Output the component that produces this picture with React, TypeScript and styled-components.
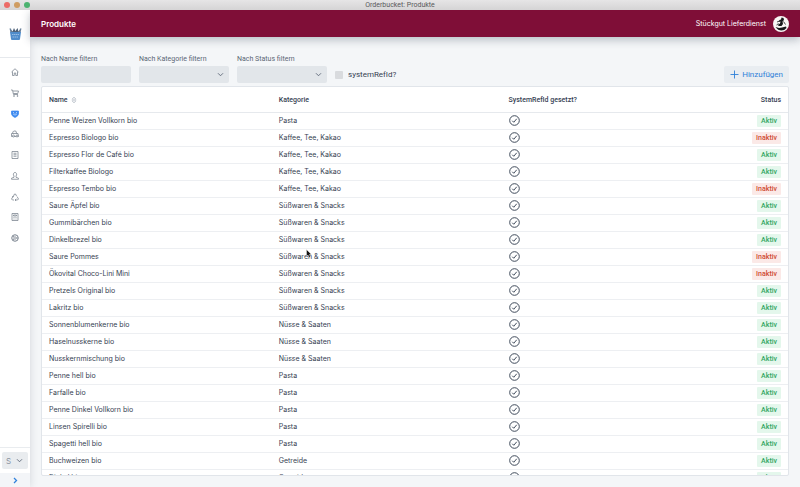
import React from "react";
import styled, { createGlobalStyle, css } from "styled-components";

const compactFont = 'Roboto, "Liberation Sans", sans-serif';

const GlobalStyle = createGlobalStyle`
  *, *::before, *::after { box-sizing: border-box; }
  body {
    margin: 0;
    background: #f4f6f8;
    color: #364152;
    font-family: Inter, "Liberation Sans", sans-serif;
    font-size: 7px;
    line-height: 10px;
  }
  button, input, select { font: inherit; color: inherit; }
`;

const Window = styled.div`
  position: relative;
  display: flex;
  flex-direction: column;
  height: 100vh;
  overflow: hidden;
`;

const TitleBar = styled.div`
  position: relative;
  flex: none;
  display: flex;
  align-items: center;
  justify-content: center;
  height: 10px;
  background: linear-gradient(#e6e5e6, #d5d4d5);
  color: #59595b;
  font-family: ${compactFont};
`;

const TrafficLights = styled.div`
  position: absolute;
  left: 4px;
  top: 2px;
  display: flex;
  gap: 4px;
`;

const Light = styled.span<{ $color: string }>`
  width: 6px;
  height: 6px;
  border-radius: 50%;
  background: ${(p) => p.$color};
`;

const Body = styled.div`
  flex: 1;
  min-height: 0;
  display: flex;
`;

const Sidebar = styled.aside`
  flex: none;
  width: 30px;
  display: flex;
  flex-direction: column;
  background: #fff;
  box-shadow: 0 0 8px rgba(60, 72, 90, 0.18);
`;

const LogoBox = styled.a`
  height: 48px;
  display: flex;
  align-items: center;
  justify-content: center;
  border-bottom: 1px solid #e6e9ed;
`;

const Nav = styled.nav`
  height: 186px;
  padding: 10px 0 2px;
  display: flex;
  flex-direction: column;
  align-items: center;
  justify-content: space-between;
`;

const NavLink = styled.a<{ $active?: boolean }>`
  display: flex;
  color: ${(p) => (p.$active ? "#3d8af0" : "#77808c")};
`;

const SidebarFooter = styled.div`
  margin-top: auto;
  border-top: 1px solid #e9ecef;
`;

const arrowless = css`
  appearance: none;
  width: 100%;
  border: 0;
  outline: 0;
  border-radius: 2px;
`;

const SelectWrap = styled.div`
  position: relative;
  display: flex;
`;

const SelectArrow = styled.span`
  position: absolute;
  right: 5px;
  top: 0;
  bottom: 0;
  display: flex;
  align-items: center;
  color: #5d6878;
  pointer-events: none;
`;

const AccountBox = styled.div`
  padding: 4px 2px;
`;

const AccountSelect = styled.select`
  ${arrowless}
  height: 17px;
  padding: 0 4px;
  background: #e9ecef;
  color: #8a93a0;
  font-size: 8px;
`;

const ExpandButton = styled.button`
  display: flex;
  align-items: center;
  justify-content: center;
  width: 100%;
  height: 14px;
  padding: 0;
  border: 0;
  background: #f3f5f8;
  color: #3182dc;
`;

const Main = styled.main`
  flex: 1;
  min-width: 0;
  display: flex;
  flex-direction: column;
`;

const Header = styled.header`
  flex: none;
  display: flex;
  align-items: center;
  justify-content: space-between;
  height: 27px;
  padding: 0 11px;
  background: #7f0e37;
  color: #fff;
  box-shadow: 0 3px 9px rgba(60, 72, 90, 0.32);
`;

const PageTitle = styled.h1`
  margin: 0;
  font-size: 8px;
  font-weight: 600;
`;

const Account = styled.div`
  display: flex;
  align-items: center;
  gap: 7px;
`;

const Content = styled.div`
  flex: 1;
  min-height: 0;
  display: flex;
  flex-direction: column;
  padding: 17px 11px 11px;
`;

const Toolbar = styled.div`
  flex: none;
  display: flex;
  align-items: flex-end;
  gap: 8px;
  padding-bottom: 3px;
`;

const Field = styled.label`
  display: flex;
  flex-direction: column;
  gap: 2px;
  width: 90px;
  color: #5b6675;
  font-family: ${compactFont};
`;

const TextInput = styled.input`
  ${arrowless}
  height: 17px;
  padding: 0 5px;
  background: #e2e6ea;
`;

const FilterSelect = styled.select`
  ${arrowless}
  height: 17px;
  padding: 0 5px;
  background: #e2e6ea;
`;

const CheckLabel = styled.label`
  display: flex;
  align-items: center;
  gap: 5px;
  height: 17px;
  font-family: ${compactFont};
  font-size: 8px;
`;

const Checkbox = styled.input`
  appearance: none;
  width: 8px;
  height: 8px;
  margin: 0;
  border-radius: 1px;
  background: #d9dbde;
`;

const AddButton = styled.button`
  display: flex;
  align-items: center;
  gap: 3px;
  height: 17px;
  margin-left: auto;
  padding: 0 6px;
  border: 0;
  border-radius: 2px;
  background: #e9edf1;
  color: #2f80d8;
  font-family: ${compactFont};
  font-size: 8px;
`;

const Panel = styled.section`
  flex: 1;
  min-height: 0;
  overflow: hidden;
  background: #fff;
  border: 1px solid #e1e5ea;
  border-radius: 2px;
`;

const Table = styled.table`
  width: 100%;
  table-layout: fixed;
  border-collapse: separate;
  border-spacing: 0;
`;

const HeadCell = styled.th<{ $width?: string; $right?: boolean }>`
  width: ${(p) => p.$width ?? "auto"};
  height: 26px;
  padding: 0 7px;
  border-bottom: 1px solid #e6e9ed;
  font-family: ${compactFont};
  font-weight: 500;
  text-align: ${(p) => (p.$right ? "right" : "left")};
`;

const SortLabel = styled.span`
  display: flex;
  align-items: center;
  gap: 3px;
`;

const Cell = styled.td<{ $right?: boolean }>`
  height: 17px;
  padding: 0 7px;
  border-bottom: 1px solid #edeff2;
  text-align: ${(p) => (p.$right ? "right" : "left")};
  white-space: nowrap;

  svg {
    display: block;
    margin-bottom: 1px;
  }
`;

const Badge = styled.span<{ $inactive: boolean }>`
  display: inline-block;
  padding: 1px 4px;
  border-radius: 1px;
  font-family: ${compactFont};
  font-weight: 500;
  vertical-align: middle;
  background: ${(p) => (p.$inactive ? "#fbe9e7" : "#e4f7ec")};
  color: ${(p) => (p.$inactive ? "#cf4a32" : "#31a663")};
`;

const Pointer = styled.svg`
  position: absolute;
  left: 306px;
  top: 249px;
`;

const Chevron = ({ right = false }: { right?: boolean }) => (
  <svg width="7" height="7" viewBox="0 0 14 14" fill="none" stroke="currentColor" strokeWidth={right ? 2.6 : 1.8}>
    <path d={right ? "M4 2l5 5-5 5" : "M2 4.5l5 5 5-5"} />
  </svg>
);

const Plus = () => (
  <svg width="9" height="9" viewBox="0 0 18 18" stroke="currentColor" strokeWidth="1.8">
    <path d="M9 1v16M1 9h16" />
  </svg>
);

const SortIcon = () => (
  <svg width="6" height="8" viewBox="0 0 12 16" fill="none" stroke="#a9b1bc" strokeWidth="1.2">
    <path d="M2 6.5L6 2l4 4.5zM2 9.5L6 14l4-4.5z" />
  </svg>
);

const CheckCircle = () => (
  <svg width="11" height="11" viewBox="0 0 22 22" fill="none" stroke="#364152" strokeWidth="1.9">
    <circle cx="11" cy="11" r="9.6" />
    <path d="M6.5 11.5l3 3 6-7" />
  </svg>
);

const Logo = () => (
  <svg width="13" height="13" viewBox="0 0 26 26">
    <path d="M4 11L2 3l5 6 3-7 3 6 4-6 2 7 5-6-2 8z" fill="#4e6178" />
    <path d="M1 3h3l2 8H3zM25 3h-3l-2 8h3z" fill="#69809b" />
    <path d="M2 10h22l-2 14q0 2-2 2H6q-2 0-2-2z" fill="#4f8ccb" />
    <path d="M6 15h14M7 20h12" stroke="#b7d3ee" strokeWidth="1.4" strokeDasharray="3 1" />
  </svg>
);

const Avatar = () => (
  <svg width="16" height="16" viewBox="0 0 32 32" role="img" aria-label="Stückgut">
    <circle cx="16" cy="16" r="16" fill="#f8f7f5" />
    <path d="M17 3l4 1 1 4-3 3 1 5-3 4h-5l-3-2 5-3 1-4-4 1 2-4 3-1z" fill="#17191b" />
    <path d="M8 12l5-2M7 18l4-3M21 11l4 6" stroke="#17191b" strokeWidth="1.6" />
    <path d="M5 22l7 2 6-1 8-2 1 3q-4 5-10 5-7 0-12-7z" fill="#17191b" />
  </svg>
);

const navIcons: { label: string; art: React.ReactNode }[] = [
  { label: "Übersicht", art: <path d="M1 8l7-6.5L15 8M3 7v8h3.5v-5h3v5H13V7" /> },
  {
    label: "Bestellungen",
    art: (
      <>
        <path d="M0 2h3l2 9h9M4 4h11l-1.5 5H5" />
        <circle cx="6" cy="14" r="1" />
        <circle cx="13" cy="14" r="1" />
      </>
    ),
  },
  {
    label: "Produkte",
    art: (
      <>
        <path d="M1 2h14v6q-1 5-7 7-6-2-7-7z" fill="currentColor" />
        <path d="M4 5.5h2M10 5.5h2M8 7v4M5 9h1M10 9h1" stroke="#fff" />
      </>
    ),
  },
  {
    label: "Lieferungen",
    art: (
      <>
        <path d="M3.5 7V4l2-2h4l2 5M1 7h13l1 6H1z" />
        <circle cx="5" cy="12" r="2" fill="#fff" />
        <circle cx="12" cy="12" r="2" fill="#fff" />
      </>
    ),
  },
  { label: "Listen", art: <path d="M2 1h12v14H2zM5 4.5h6M5 7.5h6M5 10.5h6" /> },
  { label: "Kunden", art: <path d="M1 14.5h14v-2l-5-2V8q2-2 1-5-1-2-3-2T5 3q-1 3 1 5v2.5l-5 2z" /> },
  { label: "Kreislauf", art: <path d="M5 6l2-4h2l2 4M12 7l3 5-2 2H9M6 14H3l-2-2 3-5M10.5 11.5L8 14l2 2M2 8l2-1.500 2 1.500" /> },
  { label: "Berichte", art: <path d="M2 1h12v14H2zM5 4h6v2H5zM5 9h2M9 9h2M5 12h2M9 12h2" /> },
  {
    label: "Einstellungen",
    art: (
      <>
        <circle cx="8" cy="8" r="6.5" strokeWidth="2" />
        <circle cx="8" cy="8" r="2.5" />
        <path d="M10.5 8H14M4 4l2 2M4 12l2-2" />
      </>
    ),
  },
];

const snacks = "Süßwaren & Snacks";
const drinks = "Kaffee, Tee, Kakao";
const nuts = "Nüsse & Saaten";

const products: [name: string, category: string, inactive?: boolean][] = [
  ["Penne Weizen Vollkorn bio", "Pasta"],
  ["Espresso Biologo bio", drinks, true],
  ["Espresso Flor de Café bio", drinks],
  ["Filterkaffee Biologo", drinks],
  ["Espresso Tembo bio", drinks, true],
  ["Saure Äpfel bio", snacks],
  ["Gummibärchen bio", snacks],
  ["Dinkelbrezel bio", snacks],
  ["Saure Pommes", snacks, true],
  ["Ökovital Choco-Lini Mini", snacks, true],
  ["Pretzels Original bio", snacks],
  ["Lakritz bio", snacks],
  ["Sonnenblumenkerne bio", nuts],
  ["Haselnusskerne bio", nuts],
  ["Nusskernmischung bio", nuts],
  ["Penne hell bio", "Pasta"],
  ["Farfalle bio", "Pasta"],
  ["Penne Dinkel Vollkorn bio", "Pasta"],
  ["Linsen Spirelli bio", "Pasta"],
  ["Spagetti hell bio", "Pasta"],
  ["Buchweizen bio", "Getreide"],
  ["Dinkel bio", "Getreide"],
];

export default function App() {
  return (
    <>
      <GlobalStyle />
      <Window>
        <TitleBar>
          <TrafficLights>
            <Light $color="#ec6b67" />
            <Light $color="#cf9c62" />
            <Light $color="#4cb270" />
          </TrafficLights>
          Orderbucket: Produkte
        </TitleBar>
        <Body>
          <Sidebar>
            <LogoBox href="#" aria-label="Orderbucket">
              <Logo />
            </LogoBox>
            <Nav>
              {navIcons.map(({ label, art }) => (
                <NavLink key={label} href="#" aria-label={label} $active={label === "Produkte"}>
                  <svg width="8" height="8" viewBox="0 0 16 16" fill="none" stroke="currentColor" strokeWidth="1.5">
                    {art}
                  </svg>
                </NavLink>
              ))}
            </Nav>
            <SidebarFooter>
              <AccountBox>
                <SelectWrap>
                  <AccountSelect aria-label="Konto">
                    <option>S</option>
                  </AccountSelect>
                  <SelectArrow>
                    <Chevron />
                  </SelectArrow>
                </SelectWrap>
              </AccountBox>
              <ExpandButton aria-label="Menü ausklappen">
                <Chevron right />
              </ExpandButton>
            </SidebarFooter>
          </Sidebar>
          <Main>
            <Header>
              <PageTitle>Produkte</PageTitle>
              <Account>
                Stückgut Lieferdienst
                <Avatar />
              </Account>
            </Header>
            <Content>
              <Toolbar>
                <Field>
                  Nach Name filtern
                  <TextInput type="text" />
                </Field>
                <Field>
                  Nach Kategorie filtern
                  <SelectWrap>
                    <FilterSelect />
                    <SelectArrow>
                      <Chevron />
                    </SelectArrow>
                  </SelectWrap>
                </Field>
                <Field>
                  Nach Status filtern
                  <SelectWrap>
                    <FilterSelect />
                    <SelectArrow>
                      <Chevron />
                    </SelectArrow>
                  </SelectWrap>
                </Field>
                <CheckLabel>
                  <Checkbox type="checkbox" />
                  systemRefId?
                </CheckLabel>
                <AddButton>
                  <Plus />
                  Hinzufügen
                </AddButton>
              </Toolbar>
              <Panel>
                <Table>
                  <thead>
                    <tr>
                      <HeadCell $width="30.8%">
                        <SortLabel>
                          Name
                          <SortIcon />
                        </SortLabel>
                      </HeadCell>
                      <HeadCell $width="30.8%">Kategorie</HeadCell>
                      <HeadCell>SystemRefId gesetzt?</HeadCell>
                      <HeadCell $width="10%" $right>
                        Status
                      </HeadCell>
                    </tr>
                  </thead>
                  <tbody>
                    {products.map(([name, category, inactive = false]) => (
                      <tr key={name}>
                        <Cell>{name}</Cell>
                        <Cell>{category}</Cell>
                        <Cell>
                          <CheckCircle />
                        </Cell>
                        <Cell $right>
                          <Badge $inactive={inactive}>{inactive ? "Inaktiv" : "Aktiv"}</Badge>
                        </Cell>
                      </tr>
                    ))}
                  </tbody>
                </Table>
              </Panel>
            </Content>
          </Main>
        </Body>
        <Pointer width="6" height="9" viewBox="0 0 12 18" aria-hidden="true">
          <path d="M1 1v14l3-3 2 5 3-1-2-5h4z" fill="#111" stroke="#fff" strokeWidth="0.8" />
        </Pointer>
      </Window>
    </>
  );
}
